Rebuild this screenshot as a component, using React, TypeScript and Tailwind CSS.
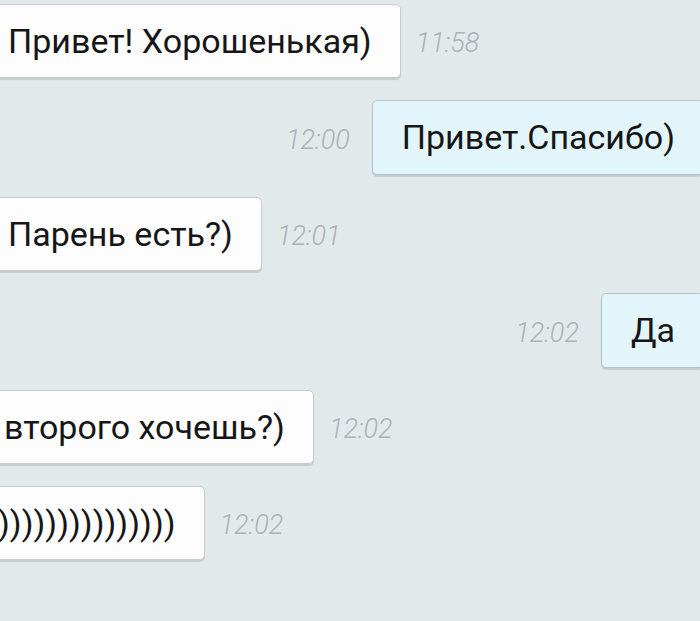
import React from "react";

type Msg = { text: string; time: string; out: boolean; ml?: number };

const msgs: Msg[] = [
  { text: "Привет! Хорошенькая)", time: "11:58", out: false, ml: -17 },
  { text: "Привет.Спасибо)", time: "12:00", out: true },
  { text: "Парень есть?)", time: "12:01", out: false, ml: -17 },
  { text: "Да", time: "12:02", out: true },
  { text: "второго хочешь?)", time: "12:02", out: false, ml: -21 },
  { text: ")))))))))))))))", time: "12:02", out: false, ml: -27 },
];

function Time({ t }: { t: string }) {
  return (
    <span className="mt-[5px] text-[27px] font-light italic leading-none text-[#aab2b6]">
      {t}
    </span>
  );
}

export default function App() {
  return (
    <div
      className="h-[621px] w-[700px] overflow-hidden bg-[#e2e9eb] pt-[4px]"
      style={{ fontFamily: "Roboto, 'Noto Sans', sans-serif" }}
    >
      <div className="flex flex-col gap-[22px]">
        {msgs.map((m, i) =>
          m.out ? (
            <div key={i} className="mr-[-3px] flex items-center justify-end gap-[22px]">
              <Time t={m.time} />
              <div className="flex h-[75px] items-center whitespace-nowrap rounded-[5px] border border-[#b3c3c8] bg-[#e2f5fa] pl-[29px] pr-[27px] text-[34px] text-[#161616] shadow-[0_2px_1px_rgba(0,0,0,0.12)]">
                {m.text}
              </div>
            </div>
          ) : (
            <div key={i} className="flex items-center gap-[15px]">
              <div
                className="flex h-[74px] items-center whitespace-nowrap rounded-[5px] border border-[#c6cccf] bg-[#fdfdfd] pl-[24px] pr-[28px] text-[34px] text-[#161616] shadow-[0_2px_1px_rgba(0,0,0,0.12)]"
                style={{ marginLeft: m.ml }}
              >
                {m.text}
              </div>
              <Time t={m.time} />
            </div>
          )
        )}
      </div>
    </div>
  );
}
